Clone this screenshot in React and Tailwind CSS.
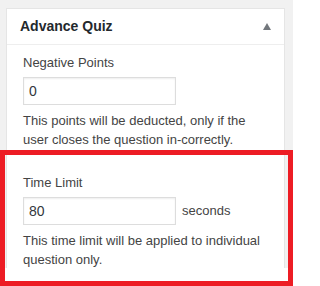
import React from "react";

function Field({ label, value, suffix, help }) {
    return (
        <div>
            <label className="block text-[13px] leading-[19px] text-[#444]">
                {label}
            </label>
            <div className="mt-[5px] flex items-center gap-[6px]">
                <div className="w-[153px] h-[28px] border border-[#ddd] shadow-[inset_0_1px_2px_rgba(0,0,0,0.07)] bg-white px-[5px] flex items-center text-[14px] text-[#32373c]">
                    {value}
                </div>
                {suffix && (
                    <span className="text-[13px] text-[#444]">{suffix}</span>
                )}
            </div>
            <p className="mt-[6px] text-[13px] leading-[19px] text-[#444]">
                {help}
            </p>
        </div>
    );
}

export default function App() {
    return (
        <div className="relative w-[293px] h-[286px] bg-white overflow-hidden font-['Segoe_UI','Liberation_Sans',sans-serif]">
            <div className="h-[268px] bg-[#f1f1f1] pt-[8px] pl-[6px] pr-[8px]">
                <div className="h-full bg-white border border-b-0 border-[#e5e5e5]">
                    <div className="h-[36px] border-b border-[#eee] flex items-center justify-between pl-[13px] pr-[13px]">
                        <h2 className="text-[14px] font-bold text-[#23282d]">
                            Advance Quiz
                        </h2>
                        <svg width="8" height="7" viewBox="0 0 8 7">
                            <path d="M4 0 L8 7 L0 7 Z" fill="#72777c" />
                        </svg>
                    </div>
                    <div className="px-[16px] pt-[8px] flex flex-col gap-[24px]">
                        <Field
                            label="Negative Points"
                            value="0"
                            help="This points will be deducted, only if the user closes the question in-correctly."
                        />
                        <Field
                            label="Time Limit"
                            value="80"
                            suffix="seconds"
                            help="This time limit will be applied to individual question only."
                        />
                    </div>
                </div>
            </div>
            <div className="absolute left-0 top-[150px] w-[293px] h-[136px] border-[5px] border-[#ed1c24]" />
        </div>
    );
}
